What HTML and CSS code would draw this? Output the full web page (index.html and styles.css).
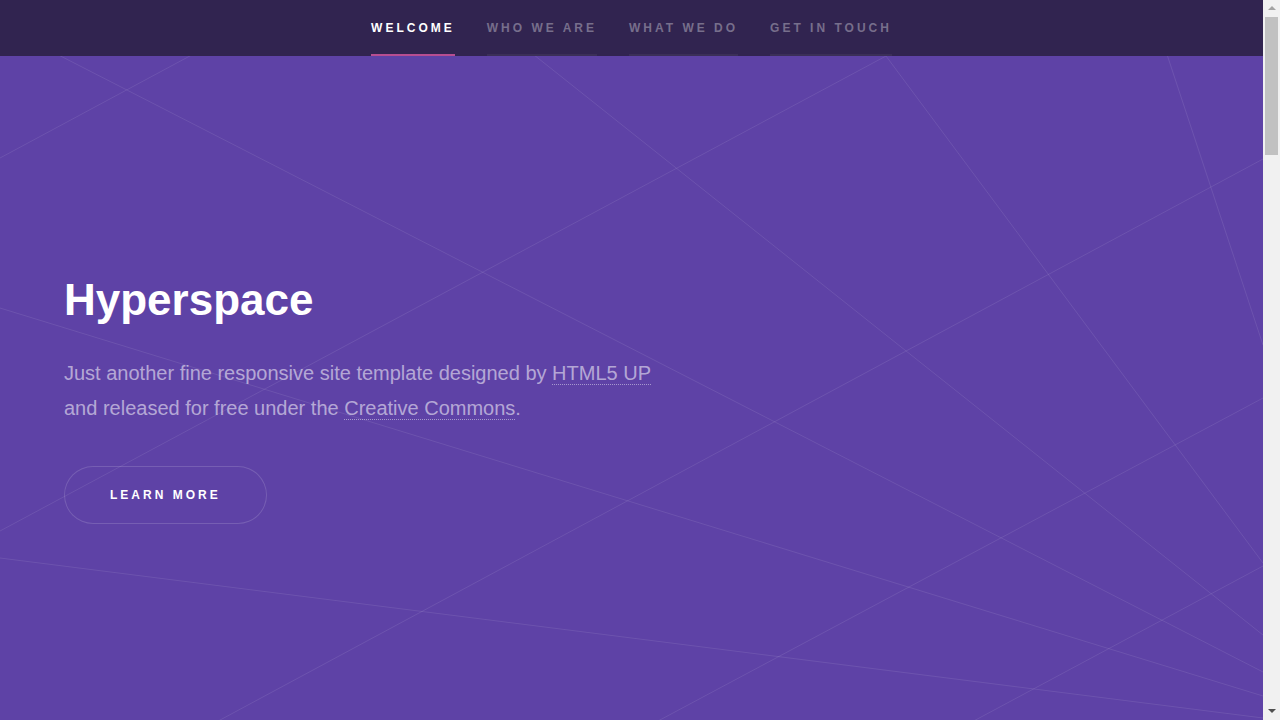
FILE: index.html
```html
<!DOCTYPE html>
<html lang="en">
<head>
<meta charset="utf-8">
<title>Hyperspace by HTML5 UP</title>
<link rel="stylesheet" href="styles.css">
</head>
<body>
<div class="app">
  <div class="page">
    <header class="topbar">
      <nav class="nav">
        <a class="nav-link active" href="#intro">Welcome</a>
        <a class="nav-link" href="#one">Who we are</a>
        <a class="nav-link" href="#two">What we do</a>
        <a class="nav-link" href="#three">Get in touch</a>
      </nav>
    </header>
    <main class="main">
      <section class="intro" id="intro">
        <svg class="intro-lines" viewBox="0 0 1263 720" xmlns="http://www.w3.org/2000/svg" aria-hidden="true">
          <g class="lines">
            <line x1="0" y1="-31" x2="1263" y2="616"/>
            <line x1="294" y1="-56" x2="0" y2="102"/>
            <line x1="465" y1="-56" x2="1263" y2="579"/>
            <line x1="886" y1="0" x2="0" y2="475"/>
            <line x1="886" y1="0" x2="1263" y2="507"/>
            <line x1="1149" y1="-56" x2="1263" y2="289"/>
            <line x1="1263" y1="103" x2="116" y2="720"/>
            <line x1="1263" y1="342" x2="555" y2="720"/>
            <line x1="0" y1="252" x2="1263" y2="640"/>
            <line x1="0" y1="502" x2="1263" y2="662"/>
            <line x1="1263" y1="510" x2="871" y2="720"/>
          </g>
        </svg>
        <div class="intro-inner">
          <h1 class="intro-title">Hyperspace</h1>
          <p class="intro-text">Just another fine responsive site template designed by <a class="text-link" href="#">HTML5 UP</a><br>and released for free under the <a class="text-link" href="#">Creative Commons</a>.</p>
          <a class="button" href="#one">Learn more</a>
        </div>
      </section>
    </main>
  </div>
  <div class="scrollbar" aria-hidden="true">
    <span class="sb-button"><span class="sb-arrow sb-up"></span></span>
    <span class="sb-track"><span class="sb-thumb"></span></span>
    <span class="sb-button"><span class="sb-arrow sb-down"></span></span>
  </div>
</div>
</body>
</html>
```
FILE: styles.css
```css
* { box-sizing: border-box; }

html, body {
  margin: 0;
  padding: 0;
  height: 100%;
  overflow: hidden;
}

body {
  background: #312450;
  color: rgba(255, 255, 255, 0.55);
  font-family: "Liberation Sans", Arial, Helvetica, sans-serif;
  font-size: 16px;
  line-height: 1.75;
}

/* Window: page + classic scrollbar */
.app {
  display: flex;
  height: 100vh;
}

.page {
  flex: 1;
  min-width: 0;
  display: flex;
  flex-direction: column;
  overflow: hidden;
}

.scrollbar {
  flex: none;
  width: 17px;
  display: flex;
  flex-direction: column;
  background: #f1f1f1;
}

.sb-button {
  flex: none;
  height: 17px;
  display: flex;
  justify-content: center;
}

.sb-arrow {
  width: 0;
  height: 0;
  border-left: 4px solid transparent;
  border-right: 4px solid transparent;
}

.sb-up {
  margin-top: 6px;
  border-bottom: 4px solid #a3a3a3;
}

.sb-down {
  margin-top: 6px;
  border-top: 4px solid #505050;
}

.sb-track {
  flex: 1;
  padding: 0 2px;
}

.sb-thumb {
  display: block;
  height: 138px;
  background: #c1c1c1;
}

/* Top bar */
.topbar {
  flex: none;
  background: #312450;
  height: 56px;
  display: flex;
  justify-content: center;
}

.nav {
  display: flex;
  gap: 32px;
  height: 56px;
}

.nav-link {
  display: block;
  height: 56px;
  line-height: 56px;
  font-size: 12px;
  font-weight: bold;
  letter-spacing: 3px;
  text-transform: uppercase;
  color: rgba(255, 255, 255, 0.35);
  text-decoration: none;
  box-shadow: inset 0 -2px 0 rgba(255, 255, 255, 0.05);
}

.nav-link.active {
  color: #ffffff;
  box-shadow: inset 0 -2px 0 #b74e91;
}

/* Intro */
.main {
  flex: 1;
  display: flex;
  flex-direction: column;
}

.intro {
  flex: 1;
  position: relative;
  overflow: hidden;
  background: #5e42a6;
}

.intro-lines {
  position: absolute;
  top: 0;
  left: 0;
  width: 1263px;
  height: 720px;
}

.lines line {
  stroke: rgba(255, 255, 255, 0.09);
  stroke-width: 1;
  fill: none;
}

.intro-inner {
  position: relative;
  padding: 211px 64px 0;
}

.intro-title {
  margin: 0 0 23px;
  color: #ffffff;
  font-size: 44px;
  line-height: 66px;
  font-weight: bold;
}

.intro-text {
  margin: 0 0 40px;
  font-size: 20px;
  line-height: 35px;
}

.text-link {
  color: inherit;
  text-decoration: none;
  border-bottom: 1px dotted rgba(255, 255, 255, 0.45);
}

.button {
  display: inline-block;
  height: 58px;
  line-height: 58px;
  padding: 0 46px;
  border-radius: 29px;
  box-shadow: inset 0 0 0 1px rgba(255, 255, 255, 0.15);
  color: #ffffff;
  font-size: 12px;
  font-weight: bold;
  letter-spacing: 3px;
  text-transform: uppercase;
  text-decoration: none;
  white-space: nowrap;
}
```
